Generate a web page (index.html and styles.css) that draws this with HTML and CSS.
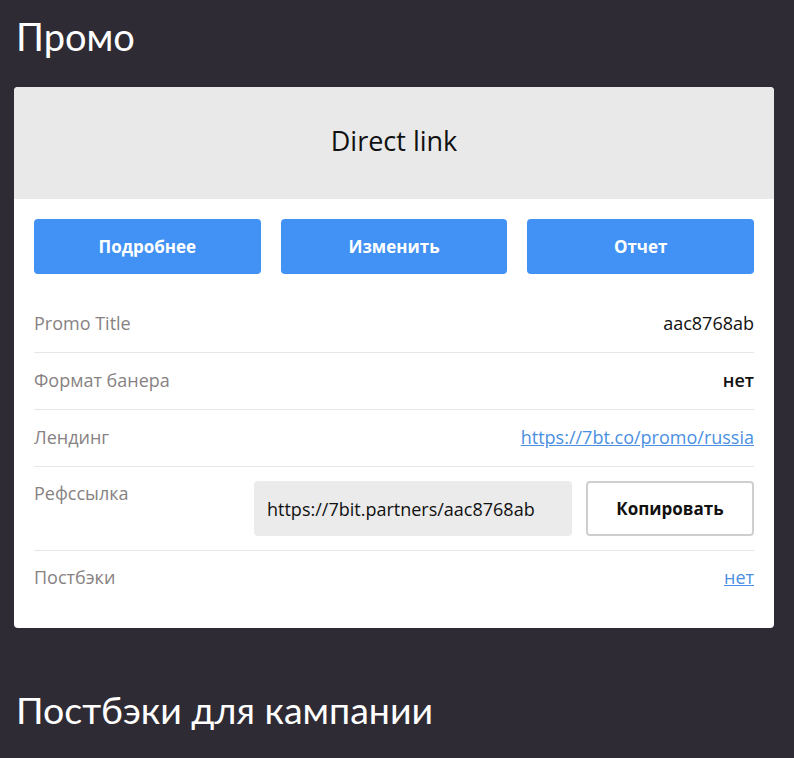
FILE: index.html
```html
<!DOCTYPE html>
<html lang="ru">
<head>
    <meta charset="UTF-8">
    <meta name="viewport" content="width=device-width, initial-scale=1.0">
    <title>Промо</title>
    <link rel="stylesheet" href="styles.css">
</head>
<body>
    <h1 class="page-title">Промо</h1>

    <div class="promo-card">
        <div class="promo-head">Direct link</div>
        <div class="promo-body">
            <div class="actions">
                <button type="button" class="btn-blue">Подробнее</button>
                <button type="button" class="btn-blue">Изменить</button>
                <button type="button" class="btn-blue">Отчет</button>
            </div>

            <div class="row">
                <span class="label">Promo Title</span>
                <span class="value">aac8768ab</span>
            </div>
            <div class="row">
                <span class="label">Формат банера</span>
                <span class="value bold">нет</span>
            </div>
            <div class="row">
                <span class="label">Лендинг</span>
                <a class="link" href="#">https://7bt.co/promo/russia</a>
            </div>
            <div class="row row-ref">
                <span class="label">Рефссылка</span>
                <div class="ref-box">
                    <input type="text" class="ref-input" value="https://7bit.partners/aac8768ab" readonly>
                    <button type="button" class="btn-copy">Копировать</button>
                </div>
            </div>
            <div class="row row-last">
                <span class="label">Постбэки</span>
                <a class="link" href="#">нет</a>
            </div>
        </div>
    </div>

    <h1 class="page-title second">Постбэки для кампании</h1>
</body>
</html>
```

FILE: styles.css
```css
body {
    background-color: #2e2b34;
    color: #fff;
    font-family: "Open Sans", Lato, sans-serif;
    margin: 0;
    padding: 0 20px 0 14px;
}

.page-title {
    font-family: Lato, sans-serif;
    font-size: 38px;
    font-weight: 400;
    margin: 0;
    padding: 12px 0 0 2px;
    line-height: 48px;
    height: 75px;
}

.page-title.second {
    padding-top: 58px;
    font-size: 37.5px;
}

.promo-card {
    background-color: #fff;
    border-radius: 4px;
    overflow: hidden;
    color: #111;
}

.promo-head {
    background-color: #e9e9e9;
    height: 112px;
    line-height: 108px;
    text-align: center;
    font-size: 27px;
}

.promo-body {
    padding: 20px 20px 22px;
}

.actions {
    display: flex;
    gap: 20px;
    margin-bottom: 22px;
}

.btn-blue {
    flex: 1;
    height: 55px;
    border: none;
    border-radius: 4px;
    background-color: #4192f4;
    color: #fff;
    font-family: inherit;
    font-size: 17px;
    font-weight: bold;
    cursor: pointer;
}

.row {
    display: flex;
    justify-content: space-between;
    align-items: center;
    height: 53px;
    padding-bottom: 3px;
    border-bottom: 1px solid #e6e6e6;
    font-size: 18px;
}

.label {
    color: #878282;
}

.value {
    color: #111;
}

.value.bold {
    font-weight: 600;
}

.link {
    color: #4a90e2;
    text-decoration: underline;
}

.row-ref {
    height: auto;
    align-items: flex-start;
    padding: 14px 0;
}

.row-ref .label {
    line-height: 24px;
}

.ref-box {
    display: flex;
    gap: 14px;
}

.ref-input {
    width: 318px;
    height: 55px;
    box-sizing: border-box;
    padding: 0 13px;
    border: none;
    border-radius: 4px;
    background-color: #ebebeb;
    color: #111;
    font-family: inherit;
    font-size: 18px;
}

.btn-copy {
    width: 168px;
    height: 55px;
    border: 2px solid #cfcfcf;
    border-radius: 4px;
    background-color: #fff;
    color: #111;
    font-family: inherit;
    font-size: 17px;
    font-weight: bold;
    cursor: pointer;
}

.row-last {
    border-bottom: none;
    height: 52px;
}
```
